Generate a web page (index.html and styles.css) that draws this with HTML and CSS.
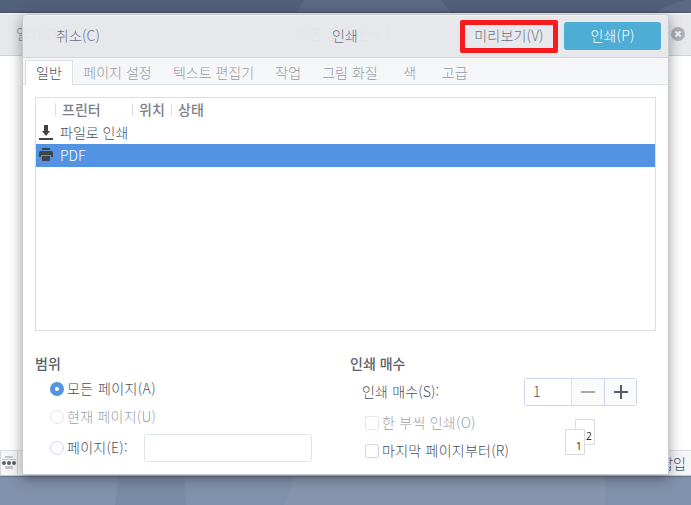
FILE: index.html
```html
<!DOCTYPE html>
<html lang="ko">
<head>
<meta charset="utf-8">
<title>인쇄</title>
<link rel="stylesheet" href="styles.css">
</head>
<body>
<svg class="wallpaper" width="691" height="505" viewBox="0 0 691 505" aria-hidden="true">
  <rect width="691" height="40" fill="#52617a"/>
  <path d="M304 0h137l11 14H296z" fill="#5b6982"/>
  <path d="M652 14Q670 4 684 0h7v14z" fill="#5b6982"/>
  <rect y="440" width="691" height="65" fill="#8091ab"/>
  <path d="M119 470h65l2 35H115z" fill="#788ba4"/>
  <path d="M296 470h309v35H284z" fill="#8694ad"/>
</svg>
<div class="app">
  <div class="app-header">
    <span class="open">열기(O)</span>
    <svg class="new" width="18" height="14" viewBox="0 0 18 14"><path fill="#f4f5f6" d="M3 1h11v8l2 3H1l2-3zM8 4v2H6v2h2v2h2V8h2V6h-2V4z" fill-rule="evenodd"/></svg>
    <span class="doc">이름 없는 문서 1</span>
    <svg class="close" width="14" height="14" viewBox="0 0 14 14"><circle cx="7" cy="7" r="7" fill="#adb0b8"/><path d="M4.5 4.5l5 5m0-5l-5 5" stroke="#eeeff2" stroke-width="2.3"/></svg>
  </div>
  <div class="page"></div>
  <div class="status">
    <svg width="18" height="24" viewBox="0 0 18 24"><path d="M.5 0v24M17.5 0v24" stroke="#d6d9de"/><path d="M5 5h8v2H5zM2 8h14v1H2zM5 15h8v3H5z" fill="#c4c6cb"/><circle cx="4" cy="12" r="2" fill="#5c616c"/><circle cx="9" cy="12" r="2" fill="#5c616c"/><circle cx="14" cy="12" r="2" fill="#5c616c"/></svg>
    <span>삽입</span>
  </div>
</div>
<div class="dialog">
  <div class="header">
    <span class="btn">취소(C)</span>
    <span class="title">인쇄</span>
    <span class="btn preview">미리보기(V)</span>
    <span class="btn primary">인쇄(P)</span>
  </div>
  <div class="tabs">
    <span class="tab active">일반</span><span class="tab">페이지 설정</span><span class="tab">텍스트 편집기</span><span class="tab">작업</span><span class="tab">그림 화질</span><span class="tab short">색</span><span class="tab">고급</span>
  </div>
  <div class="body">
    <div class="list">
      <div class="cols"><span class="c1">프린터</span><span class="c2">위치</span><span class="c3">상태</span></div>
      <div class="row"><svg width="14" height="16" viewBox="0 0 14 16"><path fill="#404347" d="M5 1h4v6h2l-4 5-4-5h2zM0 14h14v2H0z"/></svg><span>파일로 인쇄</span></div>
      <div class="row selected"><svg width="14" height="16" viewBox="0 0 14 16"><path fill="#404347" d="M3 1h8v2H3zM1 4h12l1 1v5h-2V8H2v2H0V5zM3 9h8v5H3z"/></svg><span>PDF</span></div>
    </div>
    <div class="options">
      <div class="range">
        <h2>범위</h2>
        <div class="opt all"><i class="radio on"></i><span>모든 페이지(A)</span></div>
        <div class="opt current off"><i class="radio"></i><span>현재 페이지(U)</span></div>
        <div class="opt pages"><i class="radio"></i><span>페이지(E):</span><i class="entry"></i></div>
      </div>
      <div class="copies">
        <h2>인쇄 매수</h2>
        <div class="count"><span class="label">인쇄 매수(S):</span>
          <div class="spin"><span class="num">1</span><span class="step minus"><svg width="14" height="14"><path d="M0 6h14v2H0z" fill="#a5a7ad"/></svg></span><span class="step plus"><svg width="14" height="14"><path d="M0 6h6V0h2v6h6v2H8v6H6V8H0z" fill="#565b68"/></svg></span></div>
        </div>
        <div class="order">
          <div class="checks">
            <div class="opt off"><i class="check"></i><span>한 부씩 인쇄(O)</span></div>
            <div class="opt"><i class="check"></i><span>마지막 페이지부터(R)</span></div>
          </div>
          <svg class="collate" width="30" height="36" viewBox="0 0 30 36"><g fill="#fff" stroke="#d8dae0"><path d="M10.5.5h19v25h-19z"/><path d="M.5 10.5h19v25H.5z"/></g><g class="digits"><text x="21" y="21">2</text><text x="11" y="31">1</text></g></svg>
        </div>
      </div>
    </div>
  </div>
</div>
</body>
</html>
```
FILE: styles.css
```css
* { box-sizing: border-box; }
body {
  margin: 0;
  width: 691px;
  height: 505px;
  position: relative;
  overflow: hidden;
  padding-top: 13px;
  font: 300 14px/20px "Noto Sans CJK KR", sans-serif;
  color: #4b505c;
}
svg { display: block; flex: none; }
span { white-space: nowrap; }
.wallpaper { position: absolute; top: 0; left: 0; z-index: -1; }

.app {
  height: 463px;
  display: flex;
  flex-direction: column;
  background: #fff;
  border-bottom: 1px solid #c1c6cb;
  box-shadow: 0 0 2px rgba(0, 0, 0, .5);
}
.app-header {
  height: 43px;
  display: flex;
  align-items: center;
  padding: 0 6px 2px 16px;
  background: #e7e8eb;
  border-top: 1px solid #f3f5f6;
  border-bottom: 1px solid #cfd2d7;
  color: #8a8f9c;
}
.app-header span { padding-bottom: 2px; }
.open { width: 88px; }
.doc { margin-left: 174px; }
.close { margin-left: auto; }
.page { flex: 1; }
.status {
  height: 25px;
  display: flex;
  align-items: center;
  justify-content: space-between;
  padding-right: 5px;
  background: #f5f6f7;
  border-top: 1px solid #dcdfe3;
}

.dialog {
  position: absolute;
  left: 22px;
  top: 14px;
  width: 647px;
  height: 461px;
  border: 1px solid #c8cacd;
  border-radius: 5px 5px 0 0;
  box-shadow: 0 3px 14px rgba(0, 0, 0, .38);
}
.header {
  height: 43px;
  display: grid;
  grid-template-columns: 98px 98px 1fr 98px 97px;
  column-gap: 6px;
  align-items: center;
  padding: 0 7px 2px 6px;
  background: rgba(231, 232, 235, .95);
  border-top: 1px solid #eff0f2;
  border-bottom: 1px solid #d3d6db;
  border-radius: 4px 4px 0 0;
  color: #686f85;
}
.btn, .title { text-align: center; padding-bottom: 1px; }
.btn { letter-spacing: .2px; }
.title { grid-column: 3; padding-right: 1px; }
.preview { position: relative; top: .5px; height: 33px; line-height: 21px; border: 5px solid #f81b1d; border-radius: 2px; }
.primary { height: 28px; line-height: 26px; border-radius: 3px; background: #4dadd4; color: #fff; }

.tabs {
  height: 27px;
  display: flex;
  padding: 2px 0 0 2px;
  background: #f5f6f7;
  border-bottom: 1px solid #dcdfe3;
}
.tab { padding: 2px 10.6px 0; color: #979ba3; }
.tab.short { padding: 2px 15px 0; }
.tab.active {
  height: 25px;
  padding: 1px 10px 0;
  border: 1px solid #dcdfe3;
  border-bottom: 0;
  background: #fff;
  color: #4b505c;
}

.body { height: 389px; padding: 12px 12px 0; background: #fff; }
.list { height: 234px; border: 1px solid #dcdee2; }
.cols { height: 23px; display: flex; padding: 5px 0 0 19px; font-weight: 500; color: #7d818b; }
.cols span { height: 13px; line-height: 13px; padding-left: 6px; border-left: 1px solid #dcdee2; }
.c1 { width: 77px; }
.c2 { width: 39px; }
.row { height: 23px; display: flex; align-items: center; gap: 7px; padding-left: 3px; }
.row svg { margin-bottom: 1px; }
.row span { padding-bottom: 2px; }
.selected { background: #5294e2; color: #fff; }

.options { display: flex; padding-top: 22px; }
.range { width: 315px; }
h2 { margin: 0; font-size: 14px; line-height: 20px; font-weight: 500; color: #5c616c; }
.opt { height: 28px; display: flex; align-items: center; gap: 3px; letter-spacing: .25px; }
.opt span { padding-bottom: 2px; }
.range .opt { padding-left: 15px; }
.range .all { margin-top: 2px; letter-spacing: .4px; }
.range .pages { margin-top: 3px; }
.off { color: #9da1a9; }
.radio, .check { width: 14px; height: 14px; flex: none; border: 1px solid #cfd6e6; border-radius: 50%; background: #fff; }
.check { border-radius: 2px; }
.off .radio, .off .check { border-color: #e4e6ee; }
.radio.on { border: 5px solid #5294e2; }
.pages span { width: 61px; }
.entry { width: 168px; height: 28px; margin-left: 13px; border: 1px solid #e0e4ee; border-radius: 3px; }
.count { display: flex; align-items: center; height: 28px; margin: 5px 0 3px; padding-left: 12px; }
.label { width: 162px; padding-bottom: 2px; letter-spacing: .15px; }
.spin { display: flex; width: 113px; height: 28px; border: 1px solid #cdd6e8; border-radius: 3px; }
.num { width: 46px; padding-left: 8px; line-height: 25px; }
.step { width: 33px; display: grid; place-items: center; background: #fbfbfc; border-left: 1px solid #e0e3ee; }
.plus { width: 32px; border-color: #cdd6e8; }
.order { display: flex; padding-left: 15px; }
.checks { width: 200px; }
.collate { margin-top: 10px; }
.digits { font: 400 10px "Noto Sans", sans-serif; fill: #333; }
```
